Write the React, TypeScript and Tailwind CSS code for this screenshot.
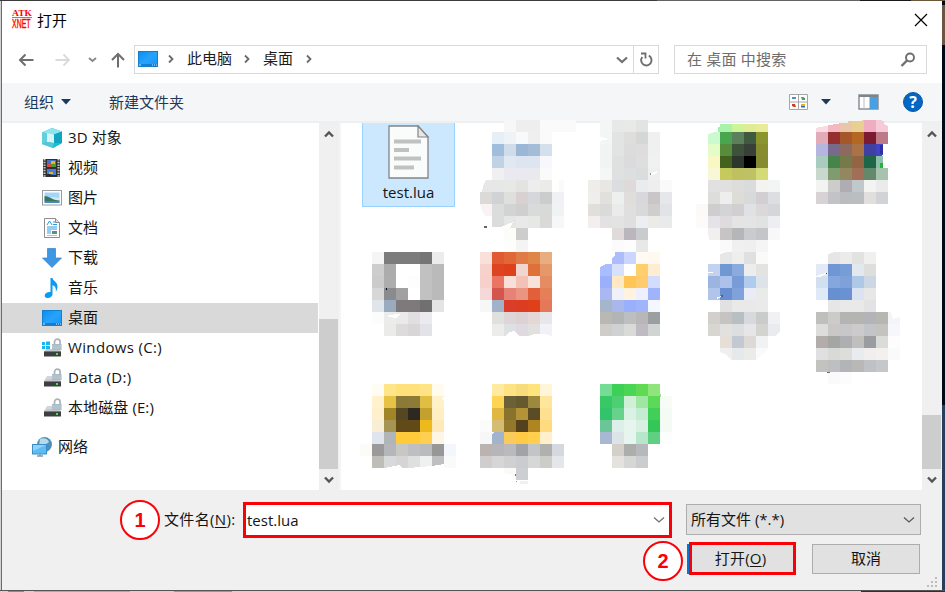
import React from 'react'

const CELL = 12

// Each thumbnail is 9 blocks wide. "col|color color ..." starts a row at that column.
const thumbnails: Thumbnail[] = [
    { rows: [] },
    {
        rows: [
            '3|f7f7f8 eeeeef eeeeef fafafa fafafa fafafa',
            '2|e7eff6 eff3f6 f8f9fb efefef fafafa',
            '2|a0bddb cfdce9 9ab7d6 a3bdd9 d4e0ec',
            '2|c2d2e5 e0e8f2 dde5f0 dde5f0 f6f8fb',
            '2|f0f0f2 eae9ef eae9ef e9e9ee fafafa',
            '1|e7e7e7 e6e7e6 e7e9e7 e3e4e1 ededed ebecea fafafa',
            '1|dbdad6 d1d2d4 dfdfdd d9d0d2 d5d7db cdcccd eff1f4',
            '1|f9f4f3 dbdcdc d1d3d5 cfcfce d8dbda d7dad9 f1f2f2',
            '2|dcdcdc e4e7e6 e9e9ea e6e8e6 dad9d7 f5f7f9',
            '3|fdfcf9 cdcdce',
            '3|fdfdfc f4f4f4',
        ],
        cuts: 'M12 60H18L15 66L14 72H12ZM12 84L14 90L17 96L20 103H24V108H12ZM24 108V107H33L45 102L42 108ZM84 60H91V72H84Z',
        dots: [[16, 106, 3, 2, '#6b6163']],
    },
    {
        rows: [
            '2|f4f6f6 e5e9e7 e9e9e8 e2e3e3',
            '2|f4f6f6 e1e4e2 dededd d5d7d6 f0f0f1',
            '2|f2f4f4 e1e4e2 dcdcdc dedcdd f0f0f0',
            '2|f2f3f3 dee1e0 dbdbdb dedede f0f1f1',
            '2|f5f6f6 dee1e0 dcdee0 dbdddc eeefee',
            '1|eeedea e9e7e3 dcdde0 dddad9 e9ebef eeeeef fafafa',
            '1|efeeec e2e0dd edf0ee e0deda d7d8db c9c5c8 e6e7ea',
            '1|e1dfda dadada ebebeb dfdfdf d9d9da d0cecc e2e3e7',
            '1|f2efee e3e1e2 e2e3e3 dfdfdf edeef2 ecebe8 e9eaec',
            '3|e0dada bbb5be c8cccc',
            '3|fbfbfb fdfdfd e8e8e8',
        ],
        cuts: 'M24 17H27V18H31V20H26V21H24ZM75 53L81 51V53L75 55Z',
        dots: [[74, 53, 1, 2, '#8f8f94']],
    },
    {
        rows: [
            '3|aaf2aa ccf598 e0eb95 e9eb96',
            '2|ccf9ce 4aa64e 5d805c 3f5a3e 8b952d',
            '2|e3fcc8 588c3d 3e513b 384039 878c2e',
            '2|f9f7c4 44621e 2d362d 000000 868a30',
            '2|f7f8d6 c6ca5c bfc060 c0c064 d4db76',
            '2|e1e1e2 e0e0e1 dedddb dadcdc f3f4f2 f3f5f5',
            '2|dddddc eeeeee dedcd7 d8dad9 d1cfd1 dcdee1',
            '1|fbfaf8 d0cdce d4d4d6 d1cfd0 dfe1e4 dcd8d9 d6d6d9',
            '1|fcfbfa e4e4e8 dfdbdd e4e4e5 e4e4e4 e1e2e2 edeef1',
            '2|f1f0ef c6c4c5 b6b5b7 c9cbce c4c5c8 f8f8f8',
            '3|fafafa f0f0f0 efefef f5f5f5',
        ],
        cuts: 'M36 3H84V4H36ZM24 12H31L24 14ZM24 112L25 120H24Z',
        dots: [[36, 0, 48, 1, '#f4f6f8'], [36, 1, 48, 2, '#eeeff0'], [34, 7, 2, 5, '#9df0b4']],
    },
    {
        rows: [
            '2|f9dbe4 f4b8c0 e9c5a9 e8cf92 efadc2 f5cbd8',
            '2|e2abb9 94302f a6572a b36722 7b1a31 bd7a89',
            '2|b5b5e0 786a8c 8c6a62 aa7345 4040a0 4343c6',
            '2|aaccc0 45854a 757a4b 926544 1f6548 8cc0a8',
            '2|c8d8cd 7f9c70 93875f a16e57 63886c a7c2ae',
            '2|f3f3f2 cccccb afadb3 c1c8cb f3f3f1 ebebeb',
            '2|d7d3d4 c3c2c7 bbbcbf babec0 e0dfde d2d3d6',
        ],
        cuts: 'M24 3V8L43 4L50 3ZM96 6L91 3H97V6ZM91 24H96V48H91V40L88 38L91 34Z',
        dots: [
            [24, 0, 46, 1, '#f4f6f8'], [24, 1, 32, 2, '#eeeff0'], [90, 0, 6, 1, '#f4f6f8'], [92, 1, 4, 2, '#eeeff0'],
            [86, 36, 5, 5, '#8cc0a8'], [88, 43, 3, 5, '#25b53c'], [88, 25, 3, 9, '#3030a5'],
        ],
    },
    {
        rows: [
            '1|f5f5f5 7c7c7c 7c7c7c 7c7c7c 757575 ececec',
            '1|cdcdcd acacac ffffff ffffff c1c1c1 bababa',
            '1|cbcbcb adadad ffffff fdfdfd c1c1c1 bababa',
            '1|d7d7d7 8a8b8f a1a1a1 ffffff c1c1c1 bababa',
            '1|e0e5eb 9babbf 7e7a7b 7e7a7b 707070 e4e4e4',
            '1|fcfcfc ececea ebeaea e1dfe0 ebeaee',
            '2|ebebe9 dddbdc d8d6d7 e2e3e9',
        ],
        cuts: 'M27 63L40 62L36 66L30 65Z',
        dots: [[26, 36, 1, 2, '#000000']],
    },
    {
        rows: [
            '1|fae0db e05b32 df6836 e07b48 df8649 e8ae80',
            '1|f7d1cc de4420 dd401a f1d5cf e0703b e5996a',
            '1|f7d0cb ea7562 f8dfd8 f3c1b5 f8e3dc e48d62',
            '1|f6d8d8 d4554b e68376 ea9482 e16039 e57f57',
            '1|f7f7f7 a0b3ca da3d29 dc3d22 de401a e6785a',
            '2|e0e0dc ddd5d7 ddd2d3 e4d7d5 e7e7ea',
            '2|ececea dfe0e4 dedae0 e0e0de f1f2f8',
        ],
        cuts: 'M37 84L42 80L46 79L51 84ZM61 84L66 82H77L84 84Z',
    },
    {
        rows: [
            '3|adbdfc cad6ff fffbf2 fff9ef',
            '2|aabeff d8e1fb ffffff ffcf6e ffedd2',
            '2|9bb0fb ffe9c2 ffc555 ffcb6d d2dcff',
            '2|a9b8f2 f0f1f8 fff2de eeefff 9fb4fb',
            '2|a5b5cb a9b7ea 9bb0fd 9fb4fb f4f7ff',
            '2|b9b8b3 b3b5b4 bdbebf b8b6b6 9a9fa1',
            '2|cfcdca d0d1d2 dadad9 bebbc2 d2d4d3',
        ],
        cuts: 'M36 0H39V4L36 6ZM24 12H30L24 15Z',
    },
    {
        rows: [
            '3|e6e7e6 eeeeec e0e0e0 fafafa',
            '2|c3d3ef 7098d3 8baadd ededed e3e3e1',
            '2|9bb4e0 acc2eb 779cd7 b0ccec dee3ea',
            '2|b1c5ea 6890d0 80a1da e9ecf7 e9ebe8',
            '3|e1e1e1 e9e9ea e9e9ea eaeaea',
            '2|d2cfcc c5c4c3 b8bfc3 d7d9dc cacbcb f1f1f4',
            '2|d7d6d1 e2e1df dddee0 e6e6e9 d3d4d0 eaebef',
            '3|e6dfd8 c2c9d2 dcd9d6 f0f2f4',
            '3|f0efef e6e9ec ebecea fafafa',
        ],
        cuts: 'M24 20H29V21H24ZM32 46L37 44V45L33 47ZM36 0H42L36 2ZM36 100L41 102L48 108H36ZM72 108L84 98V108ZM91 84L96 79V84Z',
        dots: [[37, 43, 2, 2, '#3f5fae']],
    },
    {
        rows: [
            '3|e5e6e5 ebebe9 e2e3e1 f0f0f0',
            '2|e3eaf6 7097d3 769dd6 e3e7ee dededd',
            '2|d2dff1 86a7de 7fa1d9 adc9e7 ccd7e4',
            '2|e0e9f6 6790d0 6a92d2 dce3f0 e7e7e7',
            '3|e6e6e6 e9e9e9 e9e9ea e3e3e3',
            '2|bfbfbe cccbca b4b4b2 b4b4b2 b2b4b7 b7b6b1 f4f5f9',
            '2|dedddd cac8c7 c7c7ca cccaca c2c4c9 c4c3c0 f6f7fb',
            '2|b2adaa a5a5a3 adafb2 c0bfbe 999da0 d9dcd9 fdfdfd',
            '2|e0e0e0 d9dad8 dddedc e9ecef f1efee f3f0ee f9fafc',
            '2|c2c2be bdbfc0 b2b4b8 b9b8b7 c0c1c4 c5c8ca',
            '3|fafafa fcfcfc',
        ],
        cuts: 'M24 24L33 21L34 22L28 25H24ZM36 0H42L36 2ZM99 60L101 67L108 65V60Z',
        dots: [[34, 21, 1, 1, '#2456a8'], [35, 120, 3, 1, '#6a6a72']],
    },
    {
        rows: [
            '1|fffcf4 ffe58a ffe17c ffe17c ffe385 fffbee',
            '1|fff2cd e6c344 8b7a37 8c7b36 e0be43 fff2c9',
            '1|ffefca a08529 554721 2d2921 c4a12f ffefc3',
            '1|f7eed5 a69453 614a17 614a17 edb91d fee9b8',
            '1|e0e4ec b0b5b7 ffcb3a ffcb3a ffd050 fff5e7',
            '0|fdfbf8 9a9a9b b5b6b9 c9c7c4 bebfc2 babbbd 979797 f3f6fa',
            '1|bebdb8 d8d9db d5d5d6 dee0df f0f0f0 bfbfbf fafafa',
        ],
        cuts: 'M24 84L30 83L39 81L42 84ZM48 84L72 82L84 80V84ZM81 14L84 13V16Z',
    },
    {
        rows: [
            '2|ffeaa2 ffe382 f6dc7d ffe37c fff5d8',
            '2|fed452 6c6036 66592f 9c893e ffe69c',
            '2|e0b741 88722e b39336 5c4c26 ffe091',
            '1|fbfbfb d4bd73 94772a 54421e ae8520 ffdb80',
            '1|f7f7f7 a2b3cc f9cb5c ffcb45 ffcf4d ffefcb',
            '1|bab3b0 b6b6ba bababc a2a3a6 c3c4c7 b0b1ad d5d9df',
            '1|cfcdcd d6d6d6 cfd0d2 cbcccf d7d7d7 cccdc9 e4e6e9',
            '3|fcfaf7 cdced2',
        ],
        cuts: 'M24 48H27L24 50ZM36 89L44 91L47 96H36Z',
        dots: [[47, 90, 1, 2, '#a5673f'], [48, 97, 1, 1, '#c98a86'], [52, 97, 8, 3, '#f1f1f1']],
    },
    {
        rows: [
            '2|74dc95 3cd057 4bd554 60d953 8fe57b',
            '2|38c865 4dcf73 cff0d5 9fe6a2 5cd957 f7fcf7',
            '2|32c46b 66d28c daf2e4 c3ecd0 42cf58 f3fbf4',
            '2|6bc596 deeee9 e6f5ee d8f0e2 32c758 f3fbf4',
            '2|a8b7d2 dce4e8 e6f5ee b8e6ca 5fcf82 fbfefd',
            '3|d3cfc9 acaeac b6b8bc',
            '3|e3e2de d6d6d6 cbcccf',
        ],
        dots: [[84, 10, 1, 3, '#9de58b']],
    },
]

const places: Place[] = [
    { name: '3D 对象', icon: 'cube' },
    { name: '视频', icon: 'video' },
    { name: '图片', icon: 'picture' },
    { name: '文档', icon: 'document' },
    { name: '下载', icon: 'download' },
    { name: '音乐', icon: 'music' },
    { name: '桌面', icon: 'desktop', active: true },
    { name: 'Windows (C:)', icon: 'system', latin: true },
    { name: 'Data (D:)', icon: 'drive', latin: true },
    { name: '本地磁盘 (E:)', icon: 'drive' },
]

const Mosaic = ({ rows, cuts, dots }: Thumbnail) => (
    <svg width="108" height="132" overflow="visible" shapeRendering="crispEdges">
        {rows.map((row, y) => {
            const [start, colors] = row.split('|')
            return colors.split(' ').map((color, x) => (
                <rect key={`${x}-${y}`} x={(Number(start) + x) * CELL} y={y * CELL} width={CELL} height={CELL} fill={`#${color}`} />
            ))
        })}
        {cuts ? <path d={cuts} fill="#fff" /> : null}
        {dots?.map(([x, y, w, h, fill], i) => <rect key={i} x={x} y={y} width={w} height={h} fill={fill} />)}
    </svg>
)

const Desktop = () => (
    <svg width="20" height="16" viewBox="0 0 20 16">
        <defs>
            <linearGradient id="screen" x1="0" y1="0" x2="1" y2="1">
                <stop offset="0" stopColor="#0a8cf0" />
                <stop offset=".5" stopColor="#27a3fb" />
                <stop offset="1" stopColor="#1695f6" />
            </linearGradient>
        </defs>
        <rect x=".5" y=".5" width="19" height="15" fill="url(#screen)" stroke="#1380cf" />
        <path d="M1 14h18" stroke="#0d5fa8" />
        <path d="M1 14h2M14 14h1M16 14h1M18 14h1" stroke="#cfeaff" />
    </svg>
)

const Drive = ({ system }: { system?: boolean }) => (
    <svg width="20" height="20" viewBox="0 0 20 20">
        {system ? (
            <path d="M0 4h3v3H0zM4 3.500h4V7H4zM0 8h3v3H0zM4 8h4v3.500H4z" fill="#19b5ee" />
        ) : <path d="M5 8h9l5 5H2z" fill="#d3d6d8" />}
        <path d="M5 11h12l2 2.500H2z" fill="#c6cacd" />
        <rect x="2" y="13" width="17" height="5.500" rx=".5" fill="#3d4042" />
        <rect x="2" y="13" width="17" height="1" fill="#777c80" />
        <rect x="14" y="15" width="2" height="2" fill="#45e83d" />
        <path d="M12.500 7V4a2.800 2.800 0 0 1 5.600 0v3" fill="none" stroke="#a9b2b8" strokeWidth="1.700" />
        <rect x="10" y="6" width="9.500" height="6" fill="#a8bac6" />
        <path d="M10 8h9.500M10 10h9.500" stroke="#bdccd6" />
    </svg>
)

const PlaceIcon = ({ icon }: { icon: string }) => {
    switch (icon) {
        case 'cube':
            return (
                <svg width="20" height="20" viewBox="0 0 20 20">
                    <path d="M0 4.500 10 0l10 3.500V15l-9 5L0 16z" fill="#2bb5cb" />
                    <path d="M0 4.500 10 0l10 3.500-8 3z" fill="#8ee5ef" />
                    <path d="M0 4.500 5 5v9L0 16z" fill="#62cfdf" />
                    <path d="m5 5 7 1.500V15l-7-1z" fill="#d8f6f8" />
                    <path d="m5 14 7 1-1 5L0 16z" fill="#56c6d8" />
                    <path d="m12 6.500 8-3V15l-8 0z" fill="#10a6bf" />
                    <path d="m12 15 8 0-9 5z" fill="#12c1d6" />
                </svg>
            )
        case 'video':
            return (
                <svg width="20" height="20" viewBox="0 0 20 20">
                    <rect x="1" y="1" width="17" height="18" fill="#303030" />
                    <path d="M2.500 1v18M16.500 1v18" stroke="#c9c9c9" strokeWidth="2" strokeDasharray="1.500 1.200" />
                    <rect x="5" y="2" width="9" height="7" fill="#4472c4" />
                    <rect x="5" y="11" width="9" height="7" fill="#437ee0" />
                    <path d="M5 6h5v3H5z" fill="#d84a43" />
                    <path d="M9 3h4v3H9zM7 14h4v2H7z" fill="#e2b822" />
                    <path d="M10 6h4v3h-4z" fill="#4a9a34" />
                    <path d="M5 16h3l2 1h4v1H5z" fill="#302a1c" />
                </svg>
            )
        case 'picture':
            return (
                <svg width="20" height="16" viewBox="0 0 20 16">
                    <rect x=".5" y=".5" width="19" height="14.500" fill="#fff" stroke="#9b9b9b" />
                    <rect x="2.500" y="2.500" width="15" height="10.500" fill="#a5d5f7" />
                    <path d="M2.500 8h5l3-1 7 1v3h-15z" fill="#d2e7f1" />
                    <path d="M2.500 6c4 0 7 3 11 4l4 .5V11h-15z" fill="#3b745c" />
                    <rect x="2.500" y="11" width="15" height="2" fill="#4489bb" />
                </svg>
            )
        case 'document':
            return (
                <svg width="20" height="20" viewBox="0 0 20 20">
                    <path d="M2.500.5h11l4 4v15h-15z" fill="#fff" stroke="#8d8d8d" />
                    <path d="M13.500.5v4h4" fill="#ddd" stroke="#8d8d8d" />
                    <path d="m5 7 2.500-4L10 7M11 4h2M11 6.500h4M5 9h10M5 11h10M5 13h4M5 15h4" fill="none" stroke="#2e9be0" />
                    <path d="M10 13h5v3h-5z" fill="#5c8d8a" />
                    <path d="M5 17.500h10" stroke="#bfbfbf" />
                </svg>
            )
        case 'download':
            return (
                <svg width="20" height="20" viewBox="0 0 20 20">
                    <path d="M5.500.5h8V10h6L10 19.500.5 10h5z" fill="#3f97e3" stroke="#2c82cf" strokeWidth=".7" />
                </svg>
            )
        case 'music':
            return (
                <svg width="20" height="20" viewBox="0 0 20 20">
                    <path d="M8.500 0h2c.2 3 5.500 4 5 9-.2 2-.8 3.500-1.700 4.600.5-3.600-.5-5.400-3.300-6.300V16c0 2.500-2.500 4-5 4-2 0-3-1-2.800-2.700.3-2.200 3-3.700 5.800-3.200z" fill="#0c9bf2" />
                </svg>
            )
        case 'desktop':
            return <Desktop />
        case 'system':
            return <Drive system />
        default:
            return <Drive />
    }
}

const Chevron = ({ down }: { down?: boolean }) => (
    <svg width="12" height="8" viewBox="0 0 12 8" className="mx-auto">
        <path d={down ? 'M2 1.500 6 5.500 10 1.500' : 'M2 6.500 6 2.500 10 6.500'} fill="none" stroke="#555" strokeWidth="2.400" />
    </svg>
)

const Crumb = () => (
    <svg width="6" height="10" viewBox="0 0 6 10">
        <path d="m1 1.500 3.500 3.500L1 8.500" fill="none" stroke="#6b6b6b" strokeWidth="1.800" />
    </svg>
)

const Badge = ({ children }: { children: string }) => (
    <div className="flex size-10 shrink-0 items-center justify-center rounded-full border-2 border-[#fb0007] bg-white font-['Liberation_Sans',sans-serif] text-xl font-bold leading-none text-[#fb0007]">{children}</div>
)

const TitleBar = () => (
    <div className="flex h-[44px] items-start justify-between pl-2.5 pr-[14px]">
        <div className="flex pt-[7px]">
            <svg width="20" height="22" viewBox="0 0 20 22" overflow="visible" fill="#f00" fontWeight="bold" className="mt-px">
                <text x="0" y="7" fontSize="9" fontFamily="Liberation Serif, serif" textLength="20" lengthAdjust="spacingAndGlyphs">ATK</text>
                <path d="M0 8.500h20" stroke="#7878ff" />
                <text x="0" y="19" fontSize="12" fontWeight="normal" stroke="#f00" strokeWidth=".4" fontFamily="Liberation Sans, sans-serif" textLength="18.500" lengthAdjust="spacingAndGlyphs">XNET</text>
            </svg>
            <span className="ml-[5px] text-black">打开</span>
        </div>
        <svg width="14" height="14" viewBox="0 0 14 14" className="mt-3">
            <path d="m1 1 12 12M13 1 1 13" stroke="#000" strokeWidth="1.200" />
        </svg>
    </div>
)

const AddressBar = () => (
    <div className="flex h-[38px] items-start">
        <div className="flex h-[29px] w-[132px] items-center pl-4 text-[#6e6e6e]">
            <svg width="16" height="14" viewBox="0 0 16 14"><path d="M15.500 7H2M7.500 1.500 2 7l5.500 5.500" fill="none" stroke="#6e6e6e" strokeWidth="2" /></svg>
            <svg width="16" height="14" viewBox="0 0 16 14" className="ml-[21px]"><path d="M.5 7H14M8.500 1.500 14 7l-5.500 5.500" fill="none" stroke="#dadada" strokeWidth="1.800" /></svg>
            <svg width="9" height="6" viewBox="0 0 9 6" className="ml-[17px]"><path d="m1 1 3.500 3L8 1" fill="none" stroke="#888" strokeWidth="1.900" /></svg>
            <svg width="14" height="16" viewBox="0 0 14 16" className="ml-[14px]"><path d="M7 15.500V2M1 8l6-6 6 6" fill="none" stroke="#6e6e6e" strokeWidth="2" /></svg>
        </div>
        <div className="flex h-[29px] w-[525px] border border-[#d9d9d9] text-[#1c1c1c]">
            <div className="flex flex-1 items-center pb-px pl-[3px]">
                <Desktop />
                <span className="ml-2.5 mr-[13px]"><Crumb /></span>
                <span className="pb-0.5">此电脑</span>
                <span className="ml-3 mr-[13px]"><Crumb /></span>
                <span className="pb-0.5">桌面</span>
                <span className="ml-[13px]"><Crumb /></span>
            </div>
            <div className="flex w-[17px] items-center">
                <svg width="12" height="8" viewBox="0 0 12 8"><path d="m1 1.500 5 4.500 5-4.500" fill="none" stroke="#717171" strokeWidth="2.200" /></svg>
            </div>
            <div className="flex w-[25px] items-center justify-center border-l border-[#d9d9d9]">
                <svg width="14" height="15" viewBox="0 0 14 15">
                    <path d="M9.800 3.700A5.200 5.200 0 1 1 3.300 5" fill="none" stroke="#6e6e6e" strokeWidth="1.900" />
                    <path d="M2 1.500h4.500V6.500" fill="none" stroke="#6e6e6e" strokeWidth="1.800" />
                </svg>
            </div>
        </div>
        <div className="ml-[15px] flex h-[29px] w-[253px] items-center justify-between border border-[#d9d9d9] pl-3 pr-2.5 text-[#6d6d6d]">
            <span className="pb-0.5 tracking-[.2px]">在 桌面 中搜索</span>
            <svg width="16" height="16" viewBox="0 0 16 16"><g fill="none" stroke="#6e6e6e"><circle cx="10" cy="5.500" r="4" strokeWidth="1.900" /><path d="M7 8.500 1.500 14" strokeWidth="2.400" /></g></svg>
        </div>
    </div>
)

const Toolbar = () => (
    <div className="flex h-10 shrink-0 items-center border-b-2 border-[#eeeff0] bg-[#f4f6f8] pl-[22px] text-[#1e395b]">
        <span className="pb-px">组织</span>
        <svg width="10" height="6" className="ml-[7px]"><path d="M0 0h10L5 5.500z" fill="#1e395b" /></svg>
        <span className="ml-[38px] pb-px">新建文件夹</span>
        <svg width="19" height="16" viewBox="0 0 19 16" className="ml-auto">
            <path d="M.5.5h18v15H.5zM9.500 0v16M0 8h19" fill="#fff" stroke="#a6a6a6" />
            <path d="M3 3h4v2H3z" fill="#4d91cf" />
            <path d="M12 3h2l2 1v2h-3z" fill="#4f9a6a" />
            <path d="M3 10h3l1 3H5l-2-1z" fill="#d23b1c" />
            <path d="M12 10h4v2h-4z" fill="#e2b71c" />
            <path d="M12 12h4v1.500h-4z" fill="#37679e" />
        </svg>
        <svg width="10" height="6" className="ml-[13px]"><path d="M0 0h10L5 5.500z" fill="#1e395b" /></svg>
        <svg width="21" height="16" viewBox="0 0 21 16" className="ml-[27px]">
            <path d="M1 1h19v14H1z" fill="#fff" stroke="#8b8f93" strokeWidth="1.500" />
            <path d="M1 2h19" stroke="#7f8488" strokeWidth="2" />
            <path d="M6 3v12" stroke="#bcbcbc" />
            <path d="M11.500 3H20v12h-8.500z" fill="#4a9fe2" />
        </svg>
        <div className="ml-6 mr-[19px] flex size-5 items-center justify-center rounded-full border border-[#0a58a5] bg-[#0067c4] font-['Open_Sans',sans-serif] text-base font-bold leading-none text-white">?</div>
    </div>
)

const Sidebar = () => (
    <div className="flex w-[337px] shrink-0">
        <div className="w-[316px] text-[#141414]">
            {places.map(({ name, icon, active, latin }) => (
                <div key={name} className={`flex h-[30px] items-center pl-10 ${active ? 'bg-[#d9d9d9]' : ''}`}>
                    <div className="flex w-5 justify-center"><PlaceIcon icon={icon} /></div>
                    <span className={`ml-1.5 pb-0.5 ${latin ? 'tracking-[.35px]' : 'tracking-[.1px]'}`}>{name}</span>
                </div>
            ))}
            <div className="mt-[9px] flex h-[30px] items-center pl-[30px]">
                <svg width="20" height="20" viewBox="0 0 20 20">
                    <circle cx="12.500" cy="7.500" r="7.500" fill="#4d91b8" />
                    <path d="M8 2c4-2 8 0 9 3l-4 3-2 3-4-3z" fill="#b5dbe7" />
                    <rect x=".5" y="7.500" width="14" height="9.500" fill="#5ebcf5" stroke="#3d8dc6" />
                    <path d="M1 8h13L1 14z" fill="#8fd3fb" />
                    <path d="M5 19h6M8 17v2" stroke="#7c9db1" strokeWidth="1.500" />
                </svg>
                <span className="ml-1.5 pb-0.5">网络</span>
            </div>
        </div>
        <div className="ml-px flex w-5 flex-col bg-[#f0f0f0]">
            <div className="flex h-[21px] items-center"><Chevron /></div>
            <div className="mr-px mt-[175px] h-[150px] bg-[#cdcdcd]" />
            <div className="flex flex-1 items-center"><Chevron down /></div>
        </div>
    </div>
)

const FileList = () => (
    <div className="flex min-w-0 flex-1 border-l-2 border-[#f5f5f5]">
        <div className="-mt-[3px] ml-[19px] grid h-[370px] w-[540px] grid-cols-5 auto-rows-[132px]">
            {thumbnails.map((item, i) => i === 0 ? (
                <div key={i} className="ml-0.5 mt-[3px] flex h-[84px] w-[93px] flex-col items-center border border-t-0 border-[#99d1ff] bg-[#cce8ff] text-[#141414]">
                    <svg width="42" height="54" viewBox="0 0 42 54" className="mt-[2px]">
                        <path d="M1 1h29l10 11v41H1z" fill="#fafcfc" stroke="#848484" strokeWidth="1.300" />
                        <path d="M30 1v11h10z" fill="#e4e8e9" stroke="#848484" strokeWidth="1.200" />
                        <path d="M6 16.500h27M6 25h15M6 33.500h27M6 42.500h20" stroke="#c0c2c2" strokeWidth="4" />
                    </svg>
                    <span className="mt-[3px] leading-5">test.lua</span>
                </div>
            ) : <Mosaic key={i} {...item} />)}
        </div>
        <div className="ml-auto flex w-5 flex-col bg-[#f0f0f0]">
            <div className="flex h-[21px] items-center"><Chevron /></div>
            <div className="mr-px mt-[271px] h-[54px] bg-[#cdcdcd]" />
            <div className="flex flex-1 items-center"><Chevron down /></div>
        </div>
    </div>
)

const Footer = () => (
    <div className="relative h-[100px] shrink-0 bg-[#f0f0f0] pt-2.5 text-[#141414]">
        <div className="flex h-10 items-center pl-[118px]">
            <Badge>1</Badge>
            <span className="ml-1 w-[79px] whitespace-nowrap pb-0.5 tracking-[.35px]">文件名(<u className="underline-offset-2">N</u>):</span>
            <div className="flex h-9 w-[429px] items-center justify-between border-[3px] border-[#fb0007] bg-white pl-px pr-1">
                test.lua
                <svg width="12" height="8"><path d="m1 1.500 5 4.500 5-4.500" fill="none" stroke="#717171" strokeWidth="1.300" /></svg>
            </div>
            <div className="mb-px ml-3.5 flex h-[31px] w-[235px] items-center justify-between border border-[#adadad] bg-[#e1e1e1] pl-1 pr-[5px]">
                <span className="pb-px">所有文件 (*.*)</span>
                <svg width="12" height="8"><path d="m1 1.500 5 4.500 5-4.500" fill="none" stroke="#555" strokeWidth="1.200" /></svg>
            </div>
        </div>
        <div className="flex pl-[641px] pt-px">
            <Badge>2</Badge>
            <div className="ml-1 mt-[3px] h-[30px] w-0.5 bg-[#0078d7]" />
            <button className="mt-px flex h-[33px] w-[107px] items-center justify-center border-[3px] border-[#fb0007] bg-[#e1e1e1] pb-0.5 pr-1 tracking-[.2px]">
                打开(<u className="underline-offset-2">O</u>)
            </button>
            <button className="ml-4 mt-[3px] h-[30px] w-[108px] border border-[#adadad] bg-[#e1e1e1] pb-0.5">取消</button>
        </div>
        <svg width="11" height="11" className="absolute bottom-0.5 right-1" fill="#bdbdbd">
            <path d="M8 0h2v2H8zM4 4h2v2H4zM8 4h2v2H8zM0 8h2v2H0zM4 8h2v2H4zM8 8h2v2H8z" />
        </svg>
    </div>
)

const App = () => {
    return (
        <div className="flex h-[592px] w-[945px] flex-col overflow-hidden bg-[#d2d2d2] font-['Open_Sans','Noto_Sans_CJK_SC',sans-serif] text-[15px] leading-6">
            <div className="flex h-px shrink-0">
                <div className="w-[657px] bg-[#3b3a3d]" />
                <div className="w-[203px] bg-[#636363]" />
                <div className="w-[51px] bg-[#1b171b]" />
                <div className="flex-1 bg-[#6b5838]" />
            </div>
            <div className="flex h-[589px] shrink-0">
                <div className="ml-px flex w-[941px] flex-col border-l border-[#6c6c6c] bg-white">
                    <TitleBar />
                    <AddressBar />
                    <Toolbar />
                    <div className="flex h-[367px] shrink-0">
                        <Sidebar />
                        <FileList />
                    </div>
                    <Footer />
                </div>
                <div className="flex flex-1 flex-col bg-[#020817]">
                    <div className="mt-1 h-10 bg-[#6d5443]" />
                    <div className="mt-[360px] flex-1 bg-[#263f5d]" />
                </div>
            </div>
            <div className="h-px shrink-0 bg-[#555]" />
            <div className="flex h-px shrink-0">
                <div className="ml-2 w-4 bg-[#8b8b8b]" />
                <div className="ml-2.5 w-24 bg-[#aaa]" />
                <div className="ml-11 w-[58px] bg-[#999]" />
                <div className="ml-auto w-[84px] bg-[#29303b]" />
            </div>
        </div>
    )
}

interface Thumbnail {
    rows: string[];
    cuts?: string;
    dots?: [number, number, number, number, string][];
}

interface Place {
    name: string;
    icon: string;
    active?: boolean;
    latin?: boolean;
}

export default App
